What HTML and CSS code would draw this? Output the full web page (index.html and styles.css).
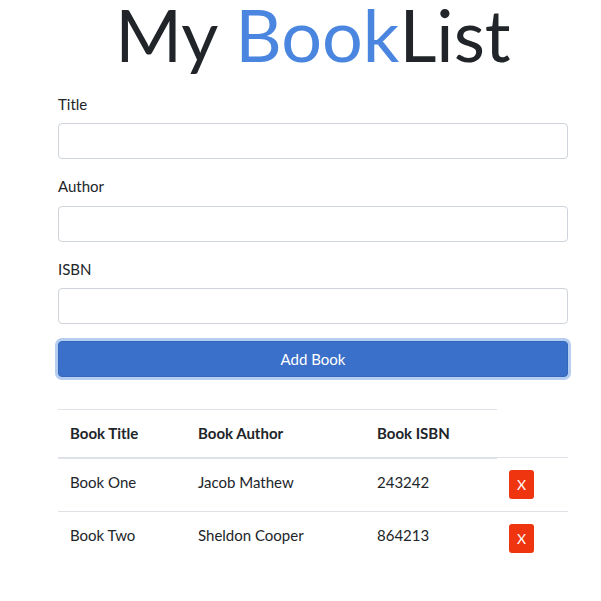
FILE: index.html
```html
<!DOCTYPE html>
<html lang="en">
<head>
<meta charset="utf-8">
<title>My BookList</title>
<link rel="stylesheet" href="styles.css">
</head>
<body>
<div class="container">
  <h1 class="brand">My <span class="brand-accent">Book</span>List</h1>
  <form class="book-form">
    <div class="form-group">
      <label class="form-label" for="title">Title</label>
      <input class="form-control" type="text" id="title">
    </div>
    <div class="form-group">
      <label class="form-label" for="author">Author</label>
      <input class="form-control" type="text" id="author">
    </div>
    <div class="form-group">
      <label class="form-label" for="isbn">ISBN</label>
      <input class="form-control" type="text" id="isbn">
    </div>
    <button type="button" class="btn-add">Add Book</button>
  </form>
  <table class="book-table">
    <thead>
      <tr>
        <th class="col-title">Book Title</th>
        <th class="col-author">Book Author</th>
        <th class="col-isbn">Book ISBN</th>
      </tr>
    </thead>
    <tbody>
      <tr>
        <td>Book One</td>
        <td>Jacob Mathew</td>
        <td>243242</td>
        <td class="cell-action"><a href="#" class="btn-delete">X</a></td>
      </tr>
      <tr>
        <td>Book Two</td>
        <td>Sheldon Cooper</td>
        <td>864213</td>
        <td class="cell-action"><a href="#" class="btn-delete">X</a></td>
      </tr>
    </tbody>
  </table>
</div>
</body>
</html>
```
FILE: styles.css
```css
*, *::before, *::after { box-sizing: border-box; }

html, body {
  margin: 0;
  padding: 0;
  background: #fff;
}

body {
  font-family: Lato, "Open Sans", sans-serif;
  font-size: 15px;
  line-height: 1.5;
  color: #212529;
}

.container {
  width: 510px;
  margin-left: 58px;
}

.brand {
  margin: 3.5px 0 28px;
  font-size: 72px;
  font-weight: 400;
  line-height: 0.85;
  text-align: center;
}

.brand-accent {
  color: #4a86e0;
}

.book-form {
  margin: 0;
}

.form-group {
  margin-bottom: 16px;
}

.form-label {
  display: block;
  margin-bottom: 8px;
}

.form-control {
  display: block;
  width: 100%;
  height: 36px;
  padding: 6px 12px;
  font: inherit;
  color: #495057;
  background: #fff;
  border: 1px solid #ced4da;
  border-radius: 4px;
}

.btn-add {
  display: block;
  width: 100%;
  height: 36px;
  margin-top: 17px;
  padding: 6px 12px;
  font: inherit;
  color: #fff;
  background: #3a70c9;
  border: 1px solid #3568bd;
  border-radius: 4px;
  box-shadow: 0 0 0 3px #b5cdf0;
  text-align: center;
}

.form-group:last-of-type {
  margin-bottom: 0;
}

.book-table {
  width: 100%;
  margin-top: 32px;
  border-collapse: collapse;
}

.book-table th,
.book-table td {
  padding: 12px;
  text-align: left;
  vertical-align: top;
  border-top: 1px solid #dee2e6;
}

.book-table th {
  font-weight: 700;
  border-bottom: 2px solid #dee2e6;
}

.col-title { width: 128px; }
.col-author { width: 179px; }
.col-isbn { width: 132px; }

.cell-action {
  padding-top: 11px;
}

.btn-delete {
  display: block;
  width: 25px;
  height: 29px;
  font-size: 14px;
  line-height: 29px;
  text-align: center;
  color: #fff;
  text-decoration: none;
  background: #ee3510;
  border-radius: 3px;
}
```
